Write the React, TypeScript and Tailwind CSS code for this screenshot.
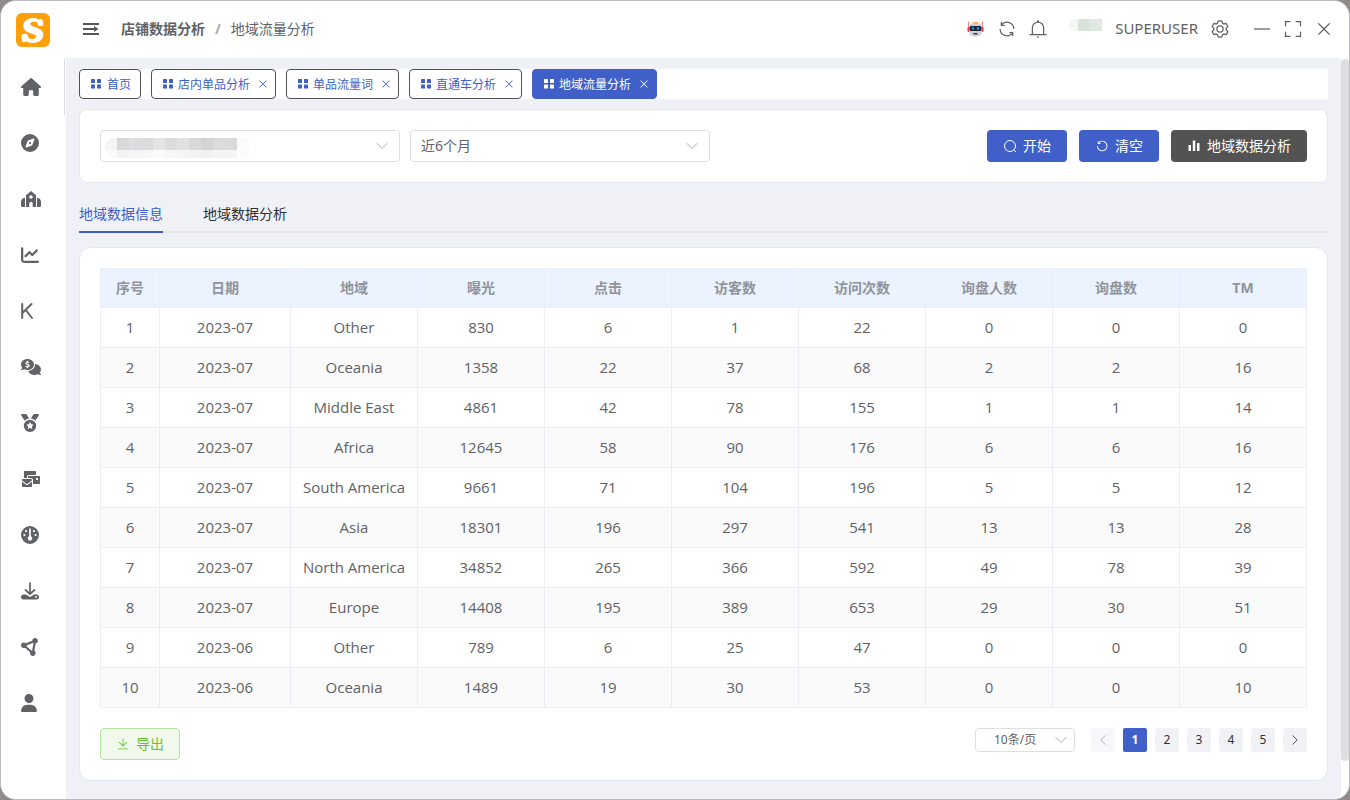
import type { ReactNode } from "react";
import {
  FaHouse,
  FaCompass,
  FaChartLine,
  FaK,
  FaCommentsDollar,
  FaMedal,
  FaEnvelopesBulk,
  FaGauge,
  FaCircleNodes,
  FaUser,
} from "react-icons/fa6";

const paths = {
  refresh:
    "M771.776 794.88A384 384 0 0 1 128 512h64a320 320 0 0 0 555.712 216.448H654.72a32 32 0 1 1 0-64h149.056a32 32 0 0 1 32 32v148.928a32 32 0 1 1-64 0v-50.56zM276.288 295.616h92.992a32 32 0 0 1 0 64H220.16a32 32 0 0 1-32-32V178.56a32 32 0 0 1 64 0v50.56A384 384 0 0 1 896.128 512h-64a320 320 0 0 0-555.776-216.384z",
  bell: "M512 64a64 64 0 0 1 64 64v64H448v-64a64 64 0 0 1 64-64zM256 768h512V448a256 256 0 1 0-512 0v320zm256-640a320 320 0 0 1 320 320v384H192V448a320 320 0 0 1 320-320zM96 768h832q32 0 32 32t-32 32H96q-32 0-32-32t32-32zm352 128h128a64 64 0 0 1-128 0z",
  close:
    "M764.288 214.592 512 466.88 259.712 214.592a31.936 31.936 0 0 0-45.12 45.12L466.752 512 214.528 764.224a31.936 31.936 0 1 0 45.12 45.184L512 557.184l252.288 252.288a31.936 31.936 0 0 0 45.12-45.12L557.12 512.064l252.288-252.352a31.936 31.936 0 1 0-45.12-45.184z",
  full: "m160 96.064 192 .192a32 32 0 0 1 0 64l-192-.192V352a32 32 0 0 1-64 0V96h64v.064zm0 831.872V928H96V672a32 32 0 1 1 64 0v191.936l192-.192a32 32 0 1 1 0 64l-192 .192zM864 96.064V96h64v256a32 32 0 1 1-64 0V160.064l-192 .192a32 32 0 1 1 0-64l192-.192zm0 831.872-192-.192a32 32 0 0 1 0-64l192 .192V672a32 32 0 1 1 64 0v256h-64v-.064z",
  setting:
    "M600.704 64a32 32 0 0 1 30.464 22.208l35.2 109.376c14.784 7.232 28.928 15.36 42.432 24.512l112.384-24.192a32 32 0 0 1 34.432 15.36L944.32 364.8a32 32 0 0 1-4.032 37.504l-77.12 85.12a357.12 357.12 0 0 1 0 49.024l77.12 85.248a32 32 0 0 1 4.032 37.504l-88.704 153.6a32 32 0 0 1-34.432 15.296L708.8 803.904c-13.44 9.088-27.648 17.28-42.368 24.512l-35.264 109.376A32 32 0 0 1 600.704 960H423.296a32 32 0 0 1-30.464-22.208L357.696 828.48a351.616 351.616 0 0 1-42.56-24.64l-112.32 24.256a32 32 0 0 1-34.432-15.36L79.68 659.2a32 32 0 0 1 4.032-37.504l77.12-85.248a357.12 357.12 0 0 1 0-48.896l-77.12-85.248A32 32 0 0 1 79.68 364.8l88.704-153.6a32 32 0 0 1 34.432-15.296l112.32 24.256c13.568-9.152 27.776-17.408 42.56-24.64l35.2-109.312A32 32 0 0 1 423.232 64H600.64zm-23.424 64H446.72l-36.352 113.088-24.512 11.968a294.113 294.113 0 0 0-34.816 20.096l-22.656 15.36-116.224-25.088-65.28 113.152 79.68 88.192-1.92 27.136a293.12 293.12 0 0 0 0 40.192l1.92 27.136-79.808 88.192 65.344 113.152 116.224-25.024 22.656 15.296a294.113 294.113 0 0 0 34.816 20.096l24.512 11.968L446.72 896h130.688l36.48-113.152 24.448-11.904a288.282 288.282 0 0 0 34.752-20.096l22.592-15.296 116.288 25.024 65.28-113.152-79.744-88.192 1.92-27.136a293.12 293.12 0 0 0 0-40.256l-1.92-27.136 79.808-88.128-65.344-113.152-116.288 24.96-22.592-15.232a287.616 287.616 0 0 0-34.752-20.096l-24.448-11.904L577.344 128zM512 320a192 192 0 1 1 0 384 192 192 0 0 1 0-384zm0 64a128 128 0 1 0 0 256 128 128 0 0 0 0-256z",
  undo: "M289.088 296.704h92.992a32 32 0 0 1 0 64H232.96a32 32 0 0 1-32-32V179.712a32 32 0 0 1 64 0v50.56a384 384 0 0 1 643.84 282.88 384 384 0 0 1-383.936 384 384 384 0 0 1-384-384h64a320 320 0 1 0 640 0 320 320 0 0 0-555.712-216.448z",
  download:
    "M160 832h704a32 32 0 1 1 0 64H160a32 32 0 1 1 0-64zm384-253.696 236.288-236.352 45.248 45.248L508.8 704 192 387.2l45.248-45.248L480 584.704V128h64v450.304z",
};

function Icon({ name, className }: { name: keyof typeof paths; className: string }) {
  return (
    <svg viewBox="0 0 1024 1024" fill="currentColor" className={className} aria-hidden="true">
      <path d={paths[name]} />
    </svg>
  );
}

function Chevron({ className }: { className: string }) {
  return (
    <svg viewBox="0 0 14 14" fill="none" stroke="currentColor" strokeLinecap="round" className={className} aria-hidden="true">
      <path d="M2 4.5 7 9.5 12 4.5" />
    </svg>
  );
}

function Logo() {
  return (
    <svg viewBox="0 0 34 34" className="size-[34px]" aria-hidden="true">
      <rect width="34" height="34" rx="6" fill="#ff9f0a" />
      <path
        fill="#fff"
        d="M26 6.200c1.100 2 1.600 4 1.300 6.200-1.500.8-3.600.9-5.200.2.100-2.300-1.200-3.900-3.600-4-2.500-.100-4.300 1-4.200 2.500.100 1.600 2.200 2.200 5.100 3.100 4.500 1.400 8 3.200 7.900 7.600-.100 5-4.500 8.300-10.700 8.200-2.600 0-4.800-.700-6.400-1.700-1.100.800-2.400 1.100-3.600.700-1-2.200-1.300-5-.800-7.600 1.800-.900 4-.900 5.600-.2.100 3 1.600 4.800 4.600 4.900 2.500.100 4.300-.900 4.300-2.500 0-1.700-2-2.300-5-3.200C10.600 19 7.200 17 7.300 12.700 7.400 8.200 11.700 5 17.400 5.100c2.200 0 4 .600 5.400 1.500.9-.7 2.100-.9 3.200-.4z"
      />
    </svg>
  );
}

function FoldIcon() {
  return (
    <svg viewBox="0 0 16 14" className="h-[14px] w-4" fill="#55575b" aria-hidden="true">
      <rect y="1" width="16" height="2" />
      <rect y="6" width="11" height="2" />
      <rect y="11" width="16" height="2" />
      <path d="M11 4 15.500 7 11 10z" />
    </svg>
  );
}

function RobotIcon() {
  return (
    <svg viewBox="0 0 17 17" className="size-[17px]" aria-hidden="true">
      <rect x="5.500" y="2" width="6" height="2" rx="1" fill="#f5b04a" />
      <path d="M1.500 1.500v10M15.500 1.500v10" stroke="#f0808a" strokeWidth="1" />
      <rect x="0.500" y="7" width="2" height="5" rx="1" fill="#f03a45" />
      <rect x="14.500" y="7" width="2" height="5" rx="1" fill="#f03a45" />
      <path d="M5 3.500h7a2.500 2.500 0 0 1 2.500 2.500v6.500c0 3-2.500 4-6 4s-6-1-6-4V6A2.500 2.500 0 0 1 5 3.500z" fill="#d2ccdc" />
      <rect x="2.500" y="6" width="12" height="5" rx="1.500" fill="#20242e" />
      <circle cx="6" cy="8.500" r="1.300" fill="#1b9fe0" />
      <circle cx="11" cy="8.500" r="1.300" fill="#1b9fe0" />
      <rect x="6.500" y="13" width="4" height="1.500" rx="0.500" fill="#353744" />
    </svg>
  );
}

function ShopIcon() {
  return (
    <svg viewBox="0 0 20 16" className="h-4 w-5" fill="currentColor" aria-hidden="true">
      <path
        fillRule="evenodd"
        d="M10 0 15 4.200v11.800h-3.300v-3.500a1.700 1.700 0 0 0-3.400 0v3.500H5V4.200zM10 4.200a1.800 1.800 0 1 0 0 3.600 1.800 1.800 0 0 0 0-3.600z"
      />
      <path d="M4 6.800v9.200H1.500A1.500 1.500 0 0 1 0 14.500V11c0-2.200 1.500-4 4-4.200zM16 6.800v9.200h2.500a1.500 1.500 0 0 0 1.500-1.500V11c0-2.200-1.500-4-4-4.200z" />
    </svg>
  );
}

function LetterKIcon() {
  return (
    <svg viewBox="0 0 12 18" className="h-[18px] w-3" fill="none" stroke="currentColor" strokeWidth="2" strokeLinecap="round" aria-hidden="true">
      <path d="M1.200 2v14M10.500 2 1.200 11.200M4.800 8 11 16" />
    </svg>
  );
}

function TrayIcon() {
  return (
    <svg viewBox="0 0 18 18" className="size-[18px]" aria-hidden="true">
      <path d="M9 1v10.500M4.500 8 9 12l4.500-4" fill="none" stroke="#606266" strokeWidth="1.700" strokeLinecap="round" />
      <path
        d="M2.500 12.500h2.300L9 15l4.200-2.500h2.300a2.500 2.500 0 0 1 0 5h-13a2.500 2.500 0 0 1 0-5z"
        fill="#606266"
      />
      <circle cx="15" cy="15" r="0.900" fill="#fff" />
    </svg>
  );
}

function GridIcon() {
  return (
    <svg viewBox="0 0 10 10" className="size-[10px]" fill="currentColor" aria-hidden="true">
      <rect width="4" height="4" rx="0.500" />
      <rect x="6" width="4" height="4" rx="0.500" />
      <rect y="5.500" width="4" height="4" rx="0.500" />
      <rect x="6" y="5.500" width="4" height="4" rx="0.500" />
    </svg>
  );
}

const navItems: { label: string; icon: ReactNode }[] = [
  { label: "首页", icon: <FaHouse className="h-[18px] w-5" /> },
  { label: "发现", icon: <FaCompass className="size-[18px]" /> },
  { label: "店铺", icon: <ShopIcon /> },
  { label: "趋势", icon: <FaChartLine className="size-[18px]" /> },
  { label: "关键词", icon: <LetterKIcon /> },
  { label: "商机", icon: <FaCommentsDollar className="h-4 w-5" /> },
  { label: "排名", icon: <FaMedal className="size-[18px]" /> },
  { label: "邮件", icon: <FaEnvelopesBulk className="h-[18px] w-5" /> },
  { label: "仪表盘", icon: <FaGauge className="size-[18px]" /> },
  { label: "下载", icon: <TrayIcon /> },
  { label: "节点", icon: <FaCircleNodes className="size-[18px]" /> },
  { label: "用户", icon: <FaUser className="h-[18px] w-4" /> },
];

const pageTabs = ["首页", "店内单品分析", "单品流量词", "直通车分析", "地域流量分析"];

const columns = ["序号", "日期", "地域", "曝光", "点击", "访客数", "访问次数", "询盘人数", "询盘数", "TM"];

const rows: (string | number)[][] = [
  [1, "2023-07", "Other", 830, 6, 1, 22, 0, 0, 0],
  [2, "2023-07", "Oceania", 1358, 22, 37, 68, 2, 2, 16],
  [3, "2023-07", "Middle East", 4861, 42, 78, 155, 1, 1, 14],
  [4, "2023-07", "Africa", 12645, 58, 90, 176, 6, 6, 16],
  [5, "2023-07", "South America", 9661, 71, 104, 196, 5, 5, 12],
  [6, "2023-07", "Asia", 18301, 196, 297, 541, 13, 13, 28],
  [7, "2023-07", "North America", 34852, 265, 366, 592, 49, 78, 39],
  [8, "2023-07", "Europe", 14408, 195, 389, 653, 29, 30, 51],
  [9, "2023-06", "Other", 789, 6, 25, 47, 0, 0, 0],
  [10, "2023-06", "Oceania", 1489, 19, 30, 53, 0, 0, 10],
];

function Sidebar() {
  return (
    <aside className="flex w-[65px] shrink-0 flex-col bg-white">
      <a href="#" aria-label="S" className="flex h-[58px] items-center pl-[15px]">
        <Logo />
      </a>
      <nav className="flex flex-col">
        {navItems.map((item, i) => (
          <a
            key={item.label}
            href="#"
            aria-label={item.label}
            className={
              i === 0
                ? "mr-px flex h-14 items-center border-r border-[#d9dce4] pl-5 text-[#606266]"
                : "flex h-14 items-center pl-5 text-[#606266]"
            }
          >
            {item.icon}
          </a>
        ))}
      </nav>
    </aside>
  );
}

function Header() {
  return (
    <header className="flex h-[57px] items-center justify-between bg-white pb-[2px] pl-[17px] pr-[15px] text-[#606266]">
      <div className="flex items-center text-sm">
        <button type="button" aria-label="折叠菜单" className="mr-[22px]">
          <FoldIcon />
        </button>
        <a href="#" className="font-bold">店铺数据分析</a>
        <span className="mx-[10px] font-bold text-[#a8abb2]">/</span>
        <span>地域流量分析</span>
      </div>
      <div className="flex items-center">
        <button type="button" aria-label="机器人" className="mr-[13px]"><RobotIcon /></button>
        <button type="button" aria-label="刷新" className="mr-[11px]"><Icon name="refresh" className="size-5" /></button>
        <button type="button" aria-label="通知" className="mr-[21px]"><Icon name="bell" className="size-5" /></button>
        <div className="mb-2 mr-[13px] flex h-3 w-[33px] overflow-hidden rounded-l-lg">
          <span className="w-[9px] bg-[#f4f5f5]" />
          <span className="w-3 bg-[#d9e2db]" />
          <span className="w-3 bg-[#dfe9e1]" />
        </div>
        <span className="mr-3 text-[15px]">SUPERUSER</span>
        <button type="button" aria-label="设置" className="mr-6"><Icon name="setting" className="size-5" /></button>
        <button type="button" aria-label="最小化" className="mr-[13px] flex h-5 w-4 items-center">
          <span className="h-[2px] w-4 bg-[#9b9da1]" />
        </button>
        <button type="button" aria-label="全屏" className="mr-[11px]"><Icon name="full" className="size-5" /></button>
        <button type="button" aria-label="关闭"><Icon name="close" className="size-5" /></button>
      </div>
    </header>
  );
}

function PageTabs() {
  return (
    <nav className="flex h-[30px] gap-[10px] bg-white text-xs">
      {pageTabs.map((label, i) => {
        const active = i === pageTabs.length - 1;
        return (
          <div
            key={label}
            className={
              active
                ? "flex items-center rounded border border-[#405fc8] bg-[#405fc8] pl-[11px] pr-[6px] text-white"
                : i === 0
                  ? "flex items-center rounded border border-[#505256] bg-white pl-[11px] pr-[9px] text-[#405fc8]"
                  : "flex items-center rounded border border-[#505256] bg-white pl-[11px] pr-[6px] text-[#405fc8]"
            }
          >
            <GridIcon />
            <a href="#" className={i === 0 ? "ml-[6px] mt-[2px]" : "ml-[5px] mt-[2px]"}>{label}</a>
            {i > 0 && (
              <button type="button" aria-label={"关闭" + label} className="ml-[7px]">
                <Icon name="close" className="size-3" />
              </button>
            )}
          </div>
        );
      })}
    </nav>
  );
}

const mosaic = [
  ["bg-[#f4f4f4]", "bg-[#fafafa]"],
  ["bg-[#d7d8d9]", "bg-[#f3f3f3]"],
  ["bg-[#dddddf]", "bg-[#f5f5f5]"],
  ["bg-[#dcdcde]", "bg-[#f7f7f7]"],
  ["bg-[#e4e4e5]", "bg-[#fafafa]"],
  ["bg-[#dbdcde]", "bg-[#f7f7f7]"],
  ["bg-[#e1e1e1]", "bg-[#f5f5f5]"],
  ["bg-[#d8d9da]", "bg-[#f2f3f3]"],
  ["bg-[#d4d4d5]", "bg-[#f0f2f1]"],
  ["bg-[#dadcdb]", "bg-[#f3f5f4]"],
  ["bg-[#d9dadc]", "bg-[#f3f4f4]"],
  ["bg-[#fbfbfb]", "bg-[#fcfcfc]"],
];

function Filters() {
  return (
    <section className="mt-[10px] flex items-center justify-between rounded-lg border border-[#e4e7ed] bg-white p-5">
      <div className="flex gap-[10px]">
        <div className="relative w-[300px]">
          <select
            aria-label="店铺"
            defaultValue=""
            className="h-8 w-full appearance-none rounded border border-[#dcdfe6] bg-white px-[10px] text-sm text-[#606266]"
          >
            <option value="" aria-label="店铺" />
          </select>
          <div className="pointer-events-none absolute left-[5px] top-2 flex overflow-hidden rounded-l-full">
            {mosaic.map(([top, bottom], i) => (
              <div key={i} className="flex w-3 flex-col">
                <span className={"h-3 " + top} />
                <span className={"h-2 " + bottom} />
              </div>
            ))}
          </div>
          <Chevron className="pointer-events-none absolute right-[11px] top-[9px] size-[14px] text-[#a8abb2]" />
        </div>
        <div className="relative w-[300px]">
          <select
            aria-label="时间范围"
            className="h-8 w-full appearance-none rounded border border-[#dcdfe6] bg-white px-[10px] text-sm text-[#606266]"
          >
            <option>近6个月</option>
          </select>
          <Chevron className="pointer-events-none absolute right-[11px] top-[9px] size-[14px] text-[#a8abb2]" />
        </div>
      </div>
      <div className="flex gap-3 text-sm text-white">
        <button type="button" className="flex h-8 items-center gap-[6px] rounded bg-[#405fc8] px-4">
          <svg viewBox="0 0 14 14" className="size-[14px]" fill="none" stroke="currentColor" aria-hidden="true">
            <circle cx="7" cy="7" r="5.500" />
            <path d="m11 11 2 2" />
          </svg>
          开始
        </button>
        <button type="button" className="flex h-8 items-center gap-[6px] rounded bg-[#405fc8] px-4">
          <Icon name="undo" className="size-[14px]" />
          清空
        </button>
        <button type="button" className="flex h-8 items-center gap-[6px] rounded bg-[#535353] px-4">
          <svg viewBox="0 0 14 14" className="size-[14px]" fill="currentColor" aria-hidden="true">
            <path d="M1.500 6h2.500v6H1.500zM5.800 1.500h2.500V12H5.800zM10 4h2.500v8H10z" />
          </svg>
          地域数据分析
        </button>
      </div>
    </section>
  );
}

function DataTable() {
  return (
    <table className="w-full table-fixed border-collapse text-center text-[#606266]">
      <colgroup>
        <col className="w-[59px]" />
        <col className="w-[131px]" />
        {columns.slice(2).map((c) => (
          <col key={c} />
        ))}
      </colgroup>
      <thead>
        <tr className="h-[39px] bg-[#eaf3ff] text-sm text-[#909399]">
          {columns.map((c) => (
            <th key={c} scope="col" className="border border-[#ebeef5] p-0 font-bold">{c}</th>
          ))}
        </tr>
      </thead>
      <tbody>
        {rows.map((row) => (
          <tr key={row[0]} className="h-10 font-['Open_Sans','Noto_Sans_CJK_SC',sans-serif] text-[15px] leading-5 even:bg-[#fafafa]">
            {row.map((cell, i) => (
              <td key={i} className="border border-[#ebeef5] p-0 pb-[2px]">{cell}</td>
            ))}
          </tr>
        ))}
      </tbody>
    </table>
  );
}

function Footer() {
  return (
    <div className="mt-5 flex items-start justify-between">
      <button
        type="button"
        className="flex h-8 items-center gap-[6px] rounded border border-[#b3e19d] bg-[#f0f9eb] px-[15px] text-sm text-[#67c23a]"
      >
        <Icon name="download" className="size-[14px]" />
        导出
      </button>
      <div className="flex items-center gap-4">
        <div className="relative w-[100px]">
          <select
            aria-label="每页条数"
            className="block h-6 w-full appearance-none rounded border border-[#dcdfe6] bg-white pl-[18px] text-xs text-[#606266]"
          >
            <option>10条/页</option>
          </select>
          <Chevron className="pointer-events-none absolute right-[7px] top-[5px] size-[14px] text-[#a8abb2]" />
        </div>
        <nav aria-label="分页" className="flex gap-2 text-xs text-[#303133]">
          <button type="button" disabled aria-label="上一页" className="flex size-6 items-center justify-center rounded-[2px] bg-[#f5f7fa] text-[#a8abb2]">
            <Chevron className="size-3 rotate-90" />
          </button>
          {[1, 2, 3, 4, 5].map((n) => (
            <button
              key={n}
              type="button"
              className={
                n === 1
                  ? "size-6 rounded-[2px] bg-[#405fc8] font-bold text-white"
                  : "size-6 rounded-[2px] bg-[#f0f2f5]"
              }
            >
              {n}
            </button>
          ))}
          <button type="button" aria-label="下一页" className="flex size-6 items-center justify-center rounded-[2px] bg-[#f0f2f5]">
            <Chevron className="size-3 -rotate-90" />
          </button>
        </nav>
      </div>
    </div>
  );
}

export default function App() {
  return (
    <div className="flex min-h-screen bg-[#918b8b] font-['Noto_Sans','Noto_Sans_CJK_SC',sans-serif]">
      <div className="flex flex-1 overflow-hidden rounded-2xl border border-[#b9bdc2] bg-white">
        <Sidebar />
        <div className="flex min-w-0 flex-1 flex-col">
          <Header />
          <div className="flex flex-1">
            <main className="min-w-0 flex-1 bg-[#f0f1f6] pb-[18px] pl-[13px] pr-[13px] pt-[11px]">
              <PageTabs />
              <Filters />
              <div role="tablist" className="mt-[10px] flex h-10 gap-10 border-b-2 border-[#e4e7ed] text-sm">
                <button type="button" role="tab" aria-selected="true" className="-mb-[2px] border-b-2 border-[#405fc8] pt-1 text-[#405fc8]">
                  地域数据信息
                </button>
                <button type="button" role="tab" aria-selected="false" className="-mb-[2px] border-b-2 border-transparent pt-1 text-[#303133]">
                  地域数据分析
                </button>
              </div>
              <section className="mt-[14px] rounded-xl border border-[#e4e7ed] bg-white p-5">
                <DataTable />
                <Footer />
              </section>
            </main>
            <div className="flex w-2 flex-col bg-white pb-[38px] pt-px">
              <div className="flex-1 rounded-full bg-[#dddee0]" />
            </div>
          </div>
        </div>
      </div>
    </div>
  );
}
